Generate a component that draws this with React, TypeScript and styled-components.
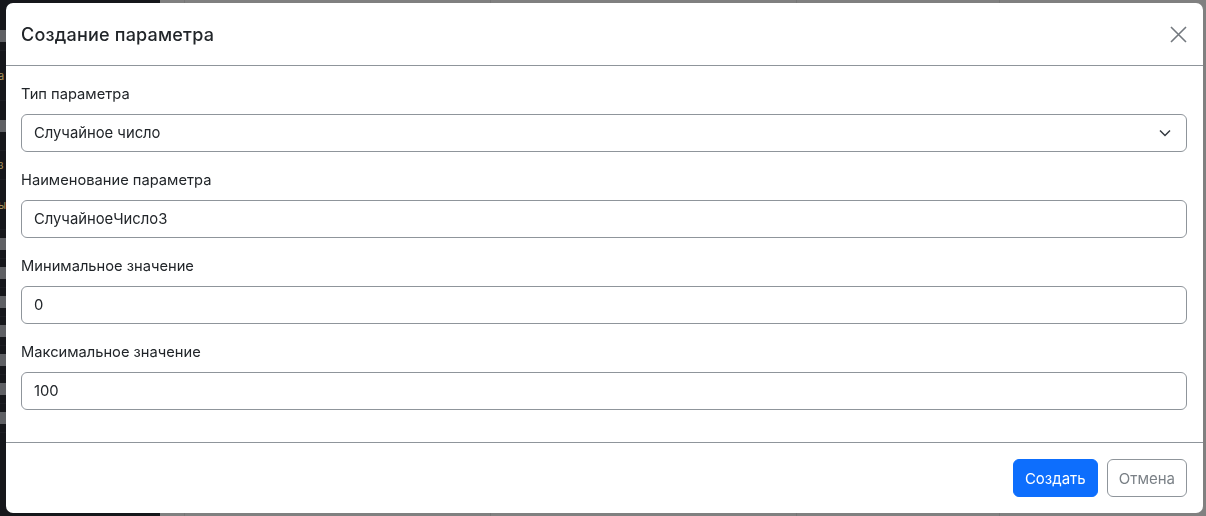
import React from "react";
import styled, { createGlobalStyle } from "styled-components";

const Styles = createGlobalStyle`
  html, body {
    margin: 0;
    padding: 0;
    height: 100%;
    overflow: hidden;
  }
  body {
    font-family: Inter, "Noto Sans", sans-serif;
    color: #212529;
    background: #808080;
  }
  * {
    box-sizing: border-box;
  }
`;

const Page = styled.div`
  display: flex;
  width: 100vw;
  height: 100vh;
`;

const Sidebar = styled.aside`
  width: 160px;
  flex: none;
  background: #16171b;
  display: flex;
  flex-direction: column;
  padding-top: 22px;
`;

const SideItem = styled.div<{ $tall?: boolean }>`
  height: ${(p) => (p.$tall ? 50 : 29)}px;
  display: flex;
  align-items: center;
  gap: 10px;
  border-bottom: 1px solid #1d1e23;
`;

const SideIcon = styled.span`
  width: 12px;
  height: 12px;
  margin-left: -4px;
  background: #5f6064;
  border-radius: 2px;
`;

const SideText = styled.span`
  font-size: 11px;
  color: #a89058;
  margin-left: -2px;
`;

const Main = styled.main`
  flex: 1;
  display: grid;
  grid-template-columns: 25px 306px 306px 203px 1fr;
  background: #808080;
`;

const Column = styled.div`
  border-right: 1px solid #767676;
`;

const Modal = styled.div`
  position: fixed;
  top: 3px;
  left: 6px;
  width: 1197px;
  height: 510px;
  background: #fff;
  border-radius: 7px;
  display: flex;
  flex-direction: column;
  overflow: hidden;
`;

const Header = styled.header`
  height: 63px;
  flex: none;
  display: flex;
  align-items: center;
  justify-content: space-between;
  padding: 0 15px;
  border-bottom: 1px solid #8f959b;
`;

const Title = styled.h5`
  margin: 0;
  font-size: 18px;
  font-weight: 500;
  color: #212529;
  letter-spacing: 0.2px;
`;

const CloseButton = styled.button`
  width: 18px;
  height: 18px;
  padding: 0;
  margin-right: 1px;
  border: 0;
  background: none;
  display: flex;
  align-items: center;
  justify-content: center;
`;

const Body = styled.div`
  flex: 1;
  padding: 16px 16px 16px 15px;
  border-bottom: 1px solid #8f959b;
`;

const Field = styled.div`
  margin-bottom: 16px;
`;

const Label = styled.label`
  display: block;
  font-size: 14.7px;
  line-height: 24px;
  margin-bottom: 8px;
  color: #212529;
`;

const Input = styled.div`
  height: 38px;
  display: flex;
  align-items: center;
  justify-content: space-between;
  padding: 0 15px 0 12px;
  border: 1px solid #8f959b;
  border-radius: 6px;
  font-size: 14.8px;
  color: #212529;
`;

const Footer = styled.footer`
  flex: none;
  height: 70px;
  display: flex;
  align-items: center;
  justify-content: flex-end;
  gap: 9px;
  padding: 0 16px 0 15px;
`;

const Button = styled.button<{ $primary?: boolean }>`
  height: 38px;
  padding: 0 11px;
  border-radius: 6px;
  font-family: Inter, "Noto Sans", sans-serif;
  font-size: 15px;
  border: 1px solid ${(p) => (p.$primary ? "#0d6efd" : "#8f959b")};
  background: ${(p) => (p.$primary ? "#0d6efd" : "#fff")};
  color: ${(p) => (p.$primary ? "#fff" : "#7a8086")};
`;

const fields = [
  { label: "Тип параметра", value: "Случайное число", select: true },
  { label: "Наименование параметра", value: "СлучайноеЧисло3" },
  { label: "Минимальное значение", value: "0" },
  { label: "Максимальное значение", value: "100" },
];

const sideItems = [
  { icon: true },
  { text: "а", tall: true },
  { icon: true, tall: true },
  { text: "з" },
  { text: "ы", tall: true },
  { icon: true },
  { icon: true },
  { icon: true },
  { icon: true },
  { icon: true },
  { icon: true },
  { icon: true },
];

const App = () => {
  return (
    <Page>
      <Styles />
      <Sidebar>
        {sideItems.map((s, i) => (
          <SideItem key={i} $tall={s.tall}>
            {s.icon ? <SideIcon /> : <SideText>{s.text}</SideText>}
          </SideItem>
        ))}
      </Sidebar>
      <Main>
        <Column />
        <Column />
        <Column />
        <Column />
        <div />
      </Main>
      <Modal>
        <Header>
          <Title>Создание параметра</Title>
          <CloseButton aria-label="Закрыть">
            <svg width="17" height="17" viewBox="0 0 17 17">
              <path
                d="M1 1L16 16M16 1L1 16"
                stroke="#73787e"
                strokeWidth="1.6"
                fill="none"
              />
            </svg>
          </CloseButton>
        </Header>
        <Body>
          {fields.map((f) => (
            <Field key={f.label}>
              <Label>{f.label}</Label>
              <Input>
                <span>{f.value}</span>
                {f.select && (
                  <svg width="12" height="8" viewBox="0 0 12 8">
                    <path
                      d="M1 1.5l5 5 5-5"
                      stroke="#343a40"
                      strokeWidth="1.5"
                      fill="none"
                    />
                  </svg>
                )}
              </Input>
            </Field>
          ))}
        </Body>
        <Footer>
          <Button $primary>Создать</Button>
          <Button>Отмена</Button>
        </Footer>
      </Modal>
    </Page>
  );
};

export default App;
